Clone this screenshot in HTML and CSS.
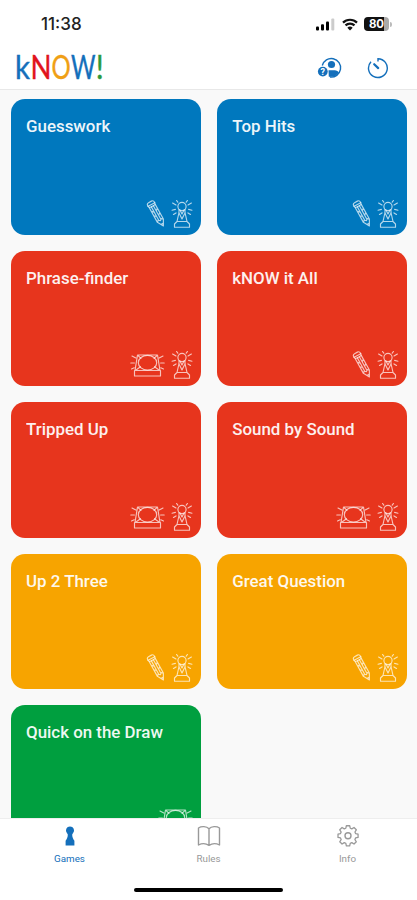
FILE: index.html
```html
<!DOCTYPE html>
<html lang="en">
  <head>
    <meta charset="UTF-8" />
    <meta name="viewport" content="width=device-width, initial-scale=1.0" />
    <title>kNOW!</title>
    <link rel="stylesheet" href="styles.css">
  </head>
  <body>
    <!-- ========== ICONS ========== -->
    <svg class="sprite" aria-hidden="true">
      <symbol id="pencil" viewBox="0 0 20 28">
        <g transform="translate(4.8 2) rotate(-29)">
          <rect x="-3.6" y="0" width="7.6" height="5" rx="2.2" />
          <path d="M-3.2 5V21.500L.3 27.500l3.300-6V5M-3.600 3h7.600M-1 5V20.500M1.300 5V20.500M-3.200 9l2.200 2M1.300 11l2.300-2M-3.200 14l2.200 2M1.300 16l2.300-2M-3.200 21.500l1.700-1.500L.3 21.500l1.600-1.500 1.700 1.500M-.7 25h2" />
        </g>
      </symbol>
      <symbol id="pawn" viewBox="0 0 22 28">
        <circle cx="11" cy="6.500" r="4.100" />
        <path d="M8 9.500v3L6 21.500l-2.500 2.500v3.200h15V24L16 21.500l-2-9v-3M6 21.500h10M7.800 12.500L11 19l3.200-6.500M9 10l2 4 2-4M1 10.200l3.400-.8M1.600 3l3.400 2M5.600 .5l1.200 1.700M21 10.200l-3.400-.8M20.400 3L17 5M16.400 .5l-1.200 1.700M2.500 14.500L5 12.900M19.500 14.500L17 12.900" />
      </symbol>
      <symbol id="buzzer" viewBox="0 0 35 27">
        <path d="M7.500 3.500h20l2.500 15.500H5zM4.500 19h26v5.500h-26zM2 4.500l3.800 2M.8 11.500h3.600M1.500 17.500l2.700-1.200M33 4.500l-3.800 2M34.200 11.500h-3.600M33.500 17.500l-2.700-1.200M8 4l3 2.800M27 4l-3 2.800M6 18.500l4.500-3.200M29 18.500l-4.500-3.200" />
        <ellipse cx="17.5" cy="11.2" rx="9.200" ry="7.300" />
      </symbol>
    </svg>

    <!-- ========== STATUS BAR ========== -->
    <div class="status-bar">
      <span class="time">11:38</span>
      <div class="status-icons">
        <svg class="signal" width="19" height="13" viewBox="0 0 19 13">
          <rect x="0" y="8.5" width="3" height="4" rx="1" />
          <rect x="5" y="6.2" width="3" height="6.3" rx="1" />
          <rect x="10" y="3.5" width="3" height="9" rx="1" />
          <rect class="dim" x="15.3" y="0.5" width="3" height="12" rx="1" />
        </svg>
        <svg class="wifi" width="16" height="13" viewBox="0 0 16 13">
          <path d="M1 4.6a10 10 0 0 1 14 0M3.5 7.4a6.4 6.4 0 0 1 9 0" />
          <path class="dot" d="M8 12.5L5.3 9.8a4 4 0 0 1 5.4 0z" />
        </svg>
        <div class="battery"><span>80</span></div>
      </div>
    </div>

    <!-- ========== HEADER ========== -->
    <header>
      <h1 class="logo"><svg width="90" height="40" viewBox="0 0 90 40"><text class="blue" x="0" y="30.500" textLength="15" lengthAdjust="spacingAndGlyphs">k</text><text class="red" x="15.500" y="30.500" textLength="21" lengthAdjust="spacingAndGlyphs">N</text><text class="orange" x="36.600" y="30.500" textLength="19.200" lengthAdjust="spacingAndGlyphs">O</text><text class="blue" x="56" y="30.500" textLength="24.500" lengthAdjust="spacingAndGlyphs">W</text><text class="green" x="80.700" y="30.500" textLength="8" lengthAdjust="spacingAndGlyphs">!</text></svg></h1>
      <div class="actions">
        <svg width="26" height="22" viewBox="0 0 26 22">
          <path class="line" d="M5.3 8.5A9.3 9.3 0 1 1 13 20" />
          <circle cx="14.5" cy="7.5" r="3.6" />
          <path d="M11.5 13.3h6.2c2 0 3.3 1 4.1 2.1-1.7 2.8-4.3 4.4-7.3 4.4h-2.7z" />
          <circle cx="5.8" cy="14.6" r="4.9" />
          <text x="5.8" y="17.8">?</text>
        </svg>
        <svg width="22" height="22" viewBox="0 0 22 22">
          <path class="line" d="M11 4.5V1.7A9.4 9.4 0 1 1 4 4.7" />
          <path class="hand" d="M7.2 7.2l4 3.9" />
        </svg>
      </div>
    </header>

    <!-- ========== GAMES ========== -->
    <main>
      <div class="card blue">
        <h2>Guesswork</h2>
        <div class="icons"><svg class="pencil"><use href="#pencil" /></svg><svg class="pawn"><use href="#pawn" /></svg></div>
      </div>
      <div class="card blue">
        <h2>Top Hits</h2>
        <div class="icons"><svg class="pencil"><use href="#pencil" /></svg><svg class="pawn"><use href="#pawn" /></svg></div>
      </div>
      <div class="card red">
        <h2>Phrase-finder</h2>
        <div class="icons"><svg class="buzzer"><use href="#buzzer" /></svg><svg class="pawn"><use href="#pawn" /></svg></div>
      </div>
      <div class="card red">
        <h2>kNOW it All</h2>
        <div class="icons"><svg class="pencil"><use href="#pencil" /></svg><svg class="pawn"><use href="#pawn" /></svg></div>
      </div>
      <div class="card red">
        <h2>Tripped Up</h2>
        <div class="icons"><svg class="buzzer"><use href="#buzzer" /></svg><svg class="pawn"><use href="#pawn" /></svg></div>
      </div>
      <div class="card red">
        <h2>Sound by Sound</h2>
        <div class="icons"><svg class="buzzer"><use href="#buzzer" /></svg><svg class="pawn"><use href="#pawn" /></svg></div>
      </div>
      <div class="card orange">
        <h2>Up 2 Three</h2>
        <div class="icons"><svg class="pencil"><use href="#pencil" /></svg><svg class="pawn"><use href="#pawn" /></svg></div>
      </div>
      <div class="card orange">
        <h2>Great Question</h2>
        <div class="icons"><svg class="pencil"><use href="#pencil" /></svg><svg class="pawn"><use href="#pawn" /></svg></div>
      </div>
      <div class="card green">
        <h2>Quick on the Draw</h2>
        <div class="icons"><svg class="buzzer"><use href="#buzzer" /></svg></div>
      </div>
    </main>

    <!-- ========== TAB BAR ========== -->
    <nav>
      <div class="tabs">
        <a class="tab active">
          <svg width="24" height="24" viewBox="0 0 24 24"><path class="fill" d="M12 2.500a4 4 0 0 1 3 6.700c-.5.500-.8.900-.8 1.500 0 2.300 1 4.300 2.200 6.100v4.700H7.600v-4.700c1.200-1.800 2.200-3.800 2.200-6.100 0-.6-.3-1-.8-1.500A4 4 0 0 1 12 2.500z" /></svg>
          <span>Games</span>
        </a>
        <a class="tab">
          <svg width="24" height="24" viewBox="0 0 24 24"><path d="M12 4.800C9.500 2.200 4.500 2 1.500 4v17c3-1.600 7.500-1.600 10.500.3 3-1.900 7.500-1.900 10.500-.3V4C19.500 2 14.500 2.200 12 4.800zM12 4.800v16.500" /></svg>
          <span>Rules</span>
        </a>
        <a class="tab">
          <svg width="24" height="24" viewBox="0 0 24 24"><path d="M10.200 2h3.600l.6 2.700 1.700.7 2.400-1.500 2.500 2.500-1.500 2.400.7 1.700 2.700.6v3.600l-2.700.6-.7 1.700 1.500 2.400-2.500 2.500-2.400-1.500-1.700.7-.6 2.700h-3.600l-.6-2.700-1.700-.7-2.400 1.500-2.500-2.500 1.500-2.400-.7-1.700-2.700-.6v-3.600l2.700-.6.7-1.700-1.500-2.400 2.500-2.500 2.400 1.500 1.700-.7z" transform="translate(1 -.1) scale(.92)" /><circle cx="12" cy="11.700" r="3" /></svg>
          <span>Info</span>
        </a>
      </div>
      <div class="home-indicator"></div>
    </nav>
  </body>
</html>
```

FILE: styles.css
```css
:root {
  --blue: #0078be;
  --red: #e7351d;
  --orange: #f7a400;
  --green: #009f3f;
  --link: #146fbb;
  --muted: #999;
}

* {
  margin: 0;
  padding: 0;
  box-sizing: border-box;
}

body {
  display: flex;
  flex-direction: column;
  height: 100vh;
  overflow: hidden;
  background-color: #fff;
  font-family: Roboto, sans-serif;
}

.sprite {
  display: none;
}

/* ========== STATUS BAR ========== */
.status-bar {
  flex: none;
  display: flex;
  justify-content: space-between;
  align-items: center;
  height: 48px;
  padding: 0 28px 0 41px;
}

.time {
  font-family: Inter, sans-serif;
  font-size: 17px;
  font-weight: 500;
  color: #222;
}

.status-icons {
  display: flex;
  align-items: center;
  gap: 6.5px;
}

.dim {
  fill: #ccc;
}

.wifi path {
  fill: none;
  stroke: #111;
  stroke-width: 2.2;
}

.wifi .dot {
  fill: #111;
  stroke: none;
}

.battery {
  position: relative;
  width: 25px;
  height: 14px;
  border-radius: 4px;
  background: linear-gradient(to right, #111 80%, #aaa 80%);
  color: #fff;
  font-family: Inter, sans-serif;
  font-size: 11.5px;
  font-weight: 700;
  line-height: 14px;
  text-align: center;
}

.battery::after {
  content: "";
  position: absolute;
  top: 4.5px;
  right: -3px;
  width: 2px;
  height: 5px;
  border-radius: 0 2px 2px 0;
  background-color: #bbb;
}

/* ========== HEADER ========== */
header {
  flex: none;
  display: flex;
  justify-content: space-between;
  align-items: flex-start;
  height: 41px;
  padding: 0 28px 0 15px;
}

.logo svg {
  display: block;
}

.logo text {
  font-family: Lato, sans-serif;
  font-size: 32px;
  font-weight: 400;
  stroke-width: 0.4;
}

.logo .blue {
  fill: #146fbb;
  stroke: #146fbb;
}

.logo .red {
  fill: #e1141c;
  stroke: #e1141c;
}

.logo .orange {
  fill: #f0a015;
  stroke: #f0a015;
}

.logo .green {
  fill: #2a9a3c;
  stroke: #2a9a3c;
}

.actions {
  display: flex;
  align-items: center;
  gap: 24px;
  padding-top: 9px;
  fill: var(--link);
}

.actions .line,
.actions .hand {
  fill: none;
  stroke: var(--link);
  stroke-width: 1.4;
}

.actions .hand {
  stroke-width: 2.2;
  stroke-linecap: round;
}

.actions text {
  fill: #fff;
  font-size: 9px;
  font-weight: 700;
  text-anchor: middle;
}

/* ========== GAMES ========== */
main {
  flex: 1;
  min-height: 0;
  overflow: hidden;
  display: grid;
  grid-template-columns: 1fr 1fr;
  grid-auto-rows: 135.6px;
  gap: 16px;
  padding: 9px 10px 0 10.5px;
  border-top: 1px solid #e8e8e8;
  background-color: #f9f9f9;
}

.card {
  display: flex;
  flex-direction: column;
  justify-content: space-between;
  padding: 17px 8px 7px 15.5px;
  border-radius: 14px;
  color: #fff;
}

.card.blue {
  background-color: var(--blue);
}

.card.red {
  background-color: var(--red);
}

.card.orange {
  background-color: var(--orange);
}

.card.green {
  background-color: var(--green);
}

.card h2 {
  font-size: 16.9px;
  font-weight: 500;
  line-height: 20px;
  opacity: 0.93;
}

.icons {
  display: flex;
  justify-content: flex-end;
  gap: 6px;
  height: 28px;
}

.icons svg {
  height: 28px;
  fill: none;
  stroke: rgba(255, 255, 255, 0.7);
  stroke-width: 1.15;
  stroke-linecap: round;
  stroke-linejoin: round;
}

.icons .pencil {
  width: 20px;
}

.icons .pawn {
  width: 22px;
}

.icons .buzzer {
  width: 35px;
}

/* ========== TAB BAR ========== */
nav {
  flex: none;
  height: 82px;
  border-top: 1px solid #eee;
  background-color: #fff;
}

.tabs {
  display: grid;
  grid-template-columns: repeat(3, 1fr);
  height: 70px;
}

.tab {
  display: flex;
  flex-direction: column;
  align-items: center;
  gap: 4px;
  padding-top: 5px;
  color: var(--muted);
  font-size: 9.8px;
  line-height: 14px;
}

.tab.active {
  color: var(--link);
}

.tab svg {
  fill: none;
  stroke: currentColor;
  stroke-width: 1.4;
  stroke-linejoin: round;
}

.tab .fill {
  fill: currentColor;
  stroke: none;
}

.home-indicator {
  width: 149px;
  height: 4px;
  margin: -1px auto 0;
  border-radius: 2px;
  background-color: #000;
}
```
